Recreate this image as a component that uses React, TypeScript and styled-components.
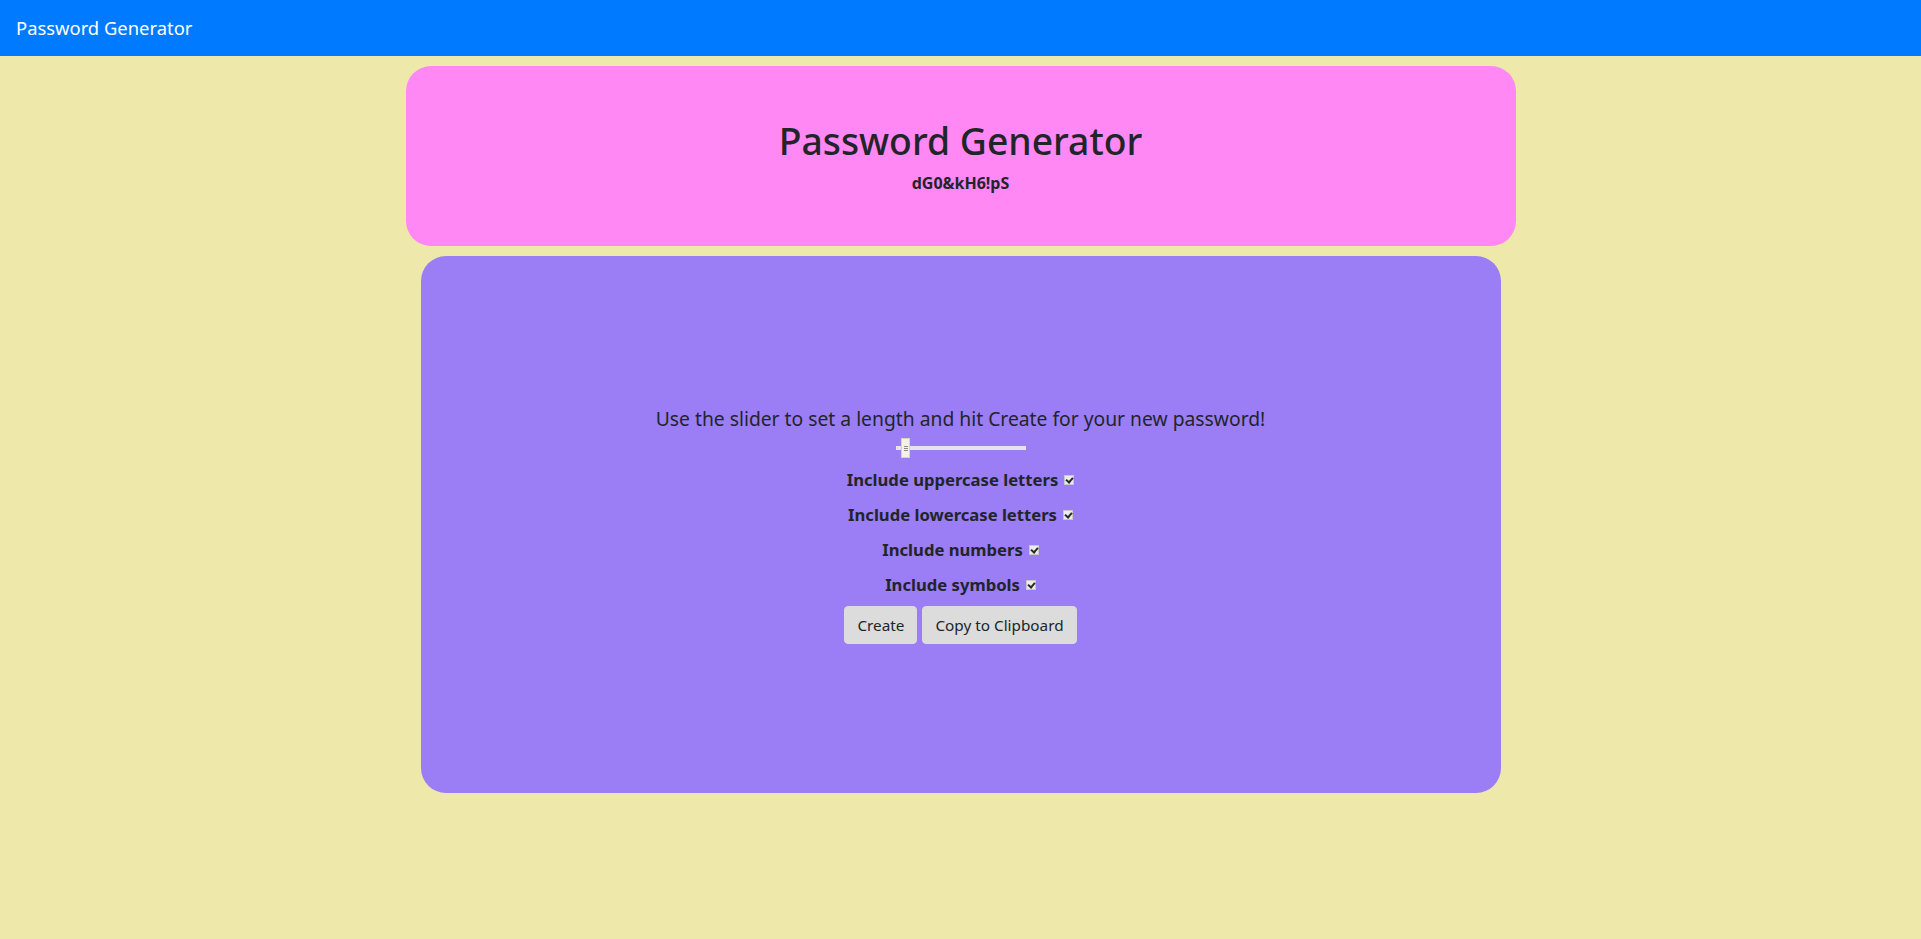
import React, { useState } from 'react'
import styled, { createGlobalStyle } from 'styled-components'

const GlobalStyle = createGlobalStyle`
  body {
    margin: 0;
    background: #eee8aa;
    font-family: 'Noto Sans', 'Open Sans', sans-serif;
    color: #212529;
  }
`

const Navbar = styled.nav`
  height: 56px;
  background: #007bff;
  display: flex;
  align-items: center;
  padding: 0 16px;
`

const Brand = styled.span`
  color: #fff;
  font-size: 18.4px;
  line-height: 30px;
`

const Container = styled.main`
  width: 1110px;
  margin: 10px auto 0;
  display: flex;
  flex-direction: column;
  gap: 10px;
`

const Header = styled.header`
  height: 180px;
  background: #ff88f5;
  border-radius: 25px;
  display: flex;
  flex-direction: column;
  align-items: center;
  justify-content: center;
`

const Title = styled.h1`
  margin: 0 0 6px;
  font-size: 37.3px;
  font-weight: 500;
  line-height: 48px;
`

const Password = styled.p`
  margin: 0;
  font-size: 16px;
  font-weight: 700;
  line-height: 24px;
`

const Panel = styled.section`
  height: 537px;
  margin: 0 15px;
  box-sizing: border-box;
  padding-top: 150px;
  background: #9b7df5;
  border-radius: 25px;
  display: flex;
  flex-direction: column;
  align-items: center;
`

const Hint = styled.p`
  margin: 0 0 7px;
  font-size: 19.3px;
  line-height: 26px;
`

const Slider = styled.input`
  -webkit-appearance: none;
  appearance: none;
  width: 130px;
  height: 18px;
  margin: 0 0 9px;
  background: transparent;

  &::-webkit-slider-runnable-track {
    height: 4px;
    background: #e8e2ea;
  }

  &::-webkit-slider-thumb {
    -webkit-appearance: none;
    width: 9px;
    height: 20px;
    margin-top: -8px;
    box-sizing: border-box;
    border: 1px solid #d6d2c4;
    background:
      linear-gradient(#8a8a80, #8a8a80) center 7px / 4px 1px no-repeat,
      linear-gradient(#8a8a80, #8a8a80) center 9px / 4px 1px no-repeat,
      linear-gradient(#8a8a80, #8a8a80) center 11px / 4px 1px no-repeat,
      #f4f2e6;
  }
`

const Option = styled.label`
  display: flex;
  align-items: center;
  gap: 6px;
  margin-bottom: 8px;
  font-size: 16.65px;
  font-weight: 700;
  line-height: 27px;
`

const Check = styled.input`
  -webkit-appearance: none;
  appearance: none;
  position: relative;
  width: 10px;
  height: 10px;
  margin: 1px 0 0;
  background: #ececec;
  border: 1px solid #c8c8c8;
  box-sizing: border-box;

  &:checked::after {
    content: '';
    position: absolute;
    left: 2px;
    top: 0px;
    width: 3px;
    height: 5px;
    border: solid #2a2a2a;
    border-width: 0 2px 2px 0;
    transform: rotate(40deg);
  }
`

const Actions = styled.div`
  display: flex;
  gap: 5px;
`

const Button = styled.button`
  height: 38px;
  padding: 0 12px;
  border: 1px solid #dcdcdc;
  border-radius: 4px;
  background: #dcdcdc;
  color: #212529;
  font-family: inherit;
  font-size: 15.3px;
  cursor: pointer;
`

const upper = 'ABCDEFGHIJKLMNOPQRSTUVWXYZ'
const lower = 'abcdefghijklmnopqrstuvwxyz'
const digits = '0123456789'
const symbols = '!@#$%^&*()_+-='

function App() {
  const [length, setLength] = useState(10)
  const [password, setPassword] = useState('dG0&kH6!pS')
  const [opts, setOpts] = useState({ upper: true, lower: true, numbers: true, symbols: true })

  const toggle = (key: keyof typeof opts) => setOpts((prev) => ({ ...prev, [key]: !prev[key] }))

  const create = () => {
    let pool = ''
    if (opts.upper) pool += upper
    if (opts.lower) pool += lower
    if (opts.numbers) pool += digits
    if (opts.symbols) pool += symbols
    if (!pool) return
    let result = ''
    for (let i = 0; i < length; i++) {
      result += pool[Math.floor(Math.random() * pool.length)]
    }
    setPassword(result)
  }

  const copy = () => {
    navigator.clipboard?.writeText(password).catch(() => {})
  }

  return (
    <>
      <GlobalStyle />
      <Navbar>
        <Brand>Password Generator</Brand>
      </Navbar>
      <Container>
        <Header>
          <Title>Password Generator</Title>
          <Password>{password}</Password>
        </Header>
        <Panel>
          <Hint>Use the slider to set a length and hit Create for your new password!</Hint>
          <Slider
            type='range'
            min={4}
            max={128}
            value={length}
            onChange={(e) => setLength(Number(e.target.value))}
          />
          <Option>
            Include uppercase letters
            <Check type='checkbox' checked={opts.upper} onChange={() => toggle('upper')} />
          </Option>
          <Option>
            Include lowercase letters
            <Check type='checkbox' checked={opts.lower} onChange={() => toggle('lower')} />
          </Option>
          <Option>
            Include numbers
            <Check type='checkbox' checked={opts.numbers} onChange={() => toggle('numbers')} />
          </Option>
          <Option>
            Include symbols
            <Check type='checkbox' checked={opts.symbols} onChange={() => toggle('symbols')} />
          </Option>
          <Actions>
            <Button onClick={create}>Create</Button>
            <Button onClick={copy}>Copy to Clipboard</Button>
          </Actions>
        </Panel>
      </Container>
    </>
  )
}

export default App
